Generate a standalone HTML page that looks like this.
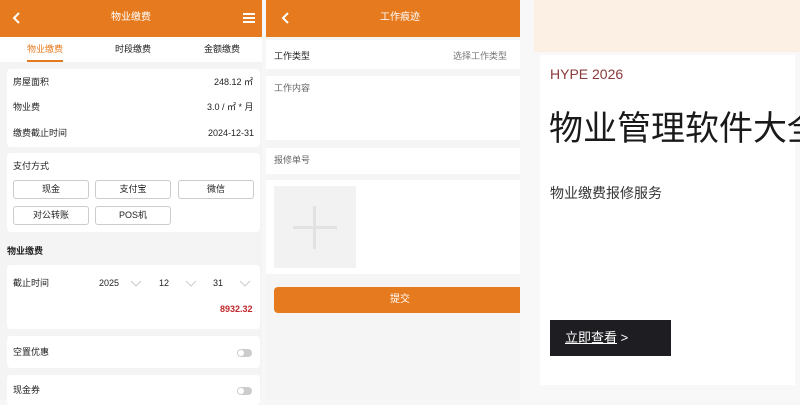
<!DOCTYPE html>
<html><head><meta charset="utf-8"><style>
*{margin:0;padding:0;box-sizing:border-box}
body{width:800px;height:400px;overflow:hidden;position:relative;background:#f7f7f7;font-family:"Liberation Sans","Noto Sans CJK SC",sans-serif;font-size:9px;color:#222;line-height:1.2}
.a{position:absolute}
.or{background:#e67a1e}
.card{position:absolute;background:#fff;border-radius:4px}
.btn{position:absolute;border:1px solid #ccc;border-radius:3px;text-align:center;line-height:17px;background:#fff;font-size:9px}
.tog{position:absolute;width:15px;height:8px;border-radius:4px;background:#ccc}
.tog::after{content:"";position:absolute;left:1px;top:1px;width:6px;height:6px;border-radius:3px;background:#fff}
.g{color:#bbb}
</style></head><body>
<!-- LEFT -->
<div class="a" style="left:0;top:0;width:262px;height:400px;background:#f4f4f4"></div>
<div class="a or" style="left:0;top:0;width:262px;height:37px"></div>
<svg class="a" style="left:12px;top:12px" width="10" height="12"><polyline points="7,1 2,6 7,11" fill="none" stroke="#fff" stroke-width="2"/></svg>
<div class="a" style="left:0;width:262px;top:12px;text-align:center;color:#fff;font-size:10px">物业缴费</div>
<div class="a" style="left:243px;top:13px;width:12px;height:2px;background:#fff;box-shadow:0 4px 0 #fff,0 8px 0 #fff"></div>
<div class="a" style="left:0;top:37px;width:262px;height:25px;background:#fff"></div>
<div class="a" style="left:27px;top:44px;color:#e67a1e">物业缴费</div>
<div class="a" style="left:27px;top:60px;width:36px;height:2px;background:#e67a1e"></div>
<div class="a" style="left:115px;top:44px">时段缴费</div>
<div class="a" style="left:204px;top:44px">金额缴费</div>
<div class="card" style="left:7px;top:69px;width:253px;height:78px"></div>
<div class="a" style="left:13px;top:77px">房屋面积</div><div class="a" style="left:214px;top:77px">248.12 ㎡</div>
<div class="a" style="left:13px;top:102px">物业费</div><div class="a" style="left:207px;top:102px">3.0 / ㎡ * 月</div>
<div class="a" style="left:13px;top:128px">缴费截止时间</div><div class="a" style="left:208px;top:128px">2024-12-31</div>
<div class="card" style="left:7px;top:153px;width:253px;height:79px"></div>
<div class="a" style="left:13px;top:161px">支付方式</div>
<div class="btn" style="left:13px;top:180px;width:76px;height:19px">现金</div>
<div class="btn" style="left:95px;top:180px;width:76px;height:19px">支付宝</div>
<div class="btn" style="left:178px;top:180px;width:76px;height:19px">微信</div>
<div class="btn" style="left:13px;top:206px;width:76px;height:19px">对公转账</div>
<div class="btn" style="left:95px;top:206px;width:76px;height:19px">POS机</div>
<div class="a" style="left:7px;top:246px;font-weight:bold">物业缴费</div>
<div class="card" style="left:7px;top:265px;width:253px;height:64px"></div>
<div class="a" style="left:13px;top:278px">截止时间</div>
<div class="a" style="left:99px;top:278px">2025</div>
<div class="a" style="left:159px;top:278px">12</div>
<div class="a" style="left:213px;top:278px">31</div>
<svg class="a" style="left:130px;top:280px" width="130" height="8"><g fill="none" stroke="#ccc" stroke-width="1"><polyline points="1,1 6,6 11,1"/><polyline points="56,1 61,6 66,1"/><polyline points="110,1 115,6 120,1"/></g></svg>
<div class="a" style="left:220px;top:304px;color:#c0282d;font-weight:bold">8932.32</div>
<div class="card" style="left:7px;top:336px;width:253px;height:32px"></div>
<div class="a" style="left:13px;top:347px">空置优惠</div><div class="tog" style="left:237px;top:349px"></div>
<div class="card" style="left:7px;top:375px;width:253px;height:30px"></div>
<div class="a" style="left:13px;top:385px">现金券</div><div class="tog" style="left:237px;top:387px"></div>
<!-- MIDDLE -->
<div class="a" style="left:266px;top:0;width:254px;height:400px;background:#f5f5f5"></div>
<div class="a or" style="left:266px;top:0;width:254px;height:37px"></div>
<svg class="a" style="left:281px;top:12px" width="10" height="12"><polyline points="7,1 2,6 7,11" fill="none" stroke="#fff" stroke-width="2"/></svg>
<div class="a" style="left:380px;top:12px;color:#fff;font-size:10px">工作痕迹</div>
<div class="a" style="left:266px;top:40px;width:254px;height:29px;background:#fff"></div>
<div class="a" style="left:274px;top:51px">工作类型</div><div class="a" style="left:453px;top:51px;color:#777">选择工作类型</div>
<div class="a" style="left:266px;top:76px;width:254px;height:64px;background:#fff"></div>
<div class="a" style="left:274px;top:83px;color:#666">工作内容</div>
<div class="a" style="left:266px;top:148px;width:254px;height:26px;background:#fff"></div>
<div class="a" style="left:274px;top:155px;color:#666">报修单号</div>
<div class="a" style="left:266px;top:180px;width:254px;height:94px;background:#fff"></div>
<div class="a" style="left:274px;top:186px;width:82px;height:82px;background:#f2f2f2"></div>
<div class="a" style="left:293px;top:226px;width:44px;height:3px;background:#e2e2e2"></div>
<div class="a" style="left:313px;top:206px;width:3px;height:43px;background:#e2e2e2"></div>
<div class="a or" style="left:274px;top:287px;width:252px;height:26px;border-radius:4px;color:#fff;text-align:center;line-height:26px;font-size:10px">提交</div>
<!-- RIGHT -->
<div class="a" style="left:520px;top:0;width:280px;height:400px;background:#f8f8f8"></div>
<div class="a" style="left:534px;top:0;width:266px;height:52px;background:#fcefe4"></div>
<div class="a" style="left:540px;top:55px;width:255px;height:330px;background:#fff"></div>
<div class="a" style="left:550px;top:66px;color:#8a3b3b;font-size:14px">HYPE 2026</div>
<div class="a" style="left:549px;top:107px;font-size:34px;color:#1a1a1a;white-space:nowrap;line-height:44px">物业管理软件大全</div>
<div class="a" style="left:550px;top:185px;font-size:14px;color:#333">物业缴费报修服务</div>
<div class="a" style="left:550px;top:320px;width:121px;height:36px;background:#1e1e22;color:#fff;font-size:13px;line-height:36px;padding-left:15px"><u>立即查看</u> &gt;</div>
</body></html>
